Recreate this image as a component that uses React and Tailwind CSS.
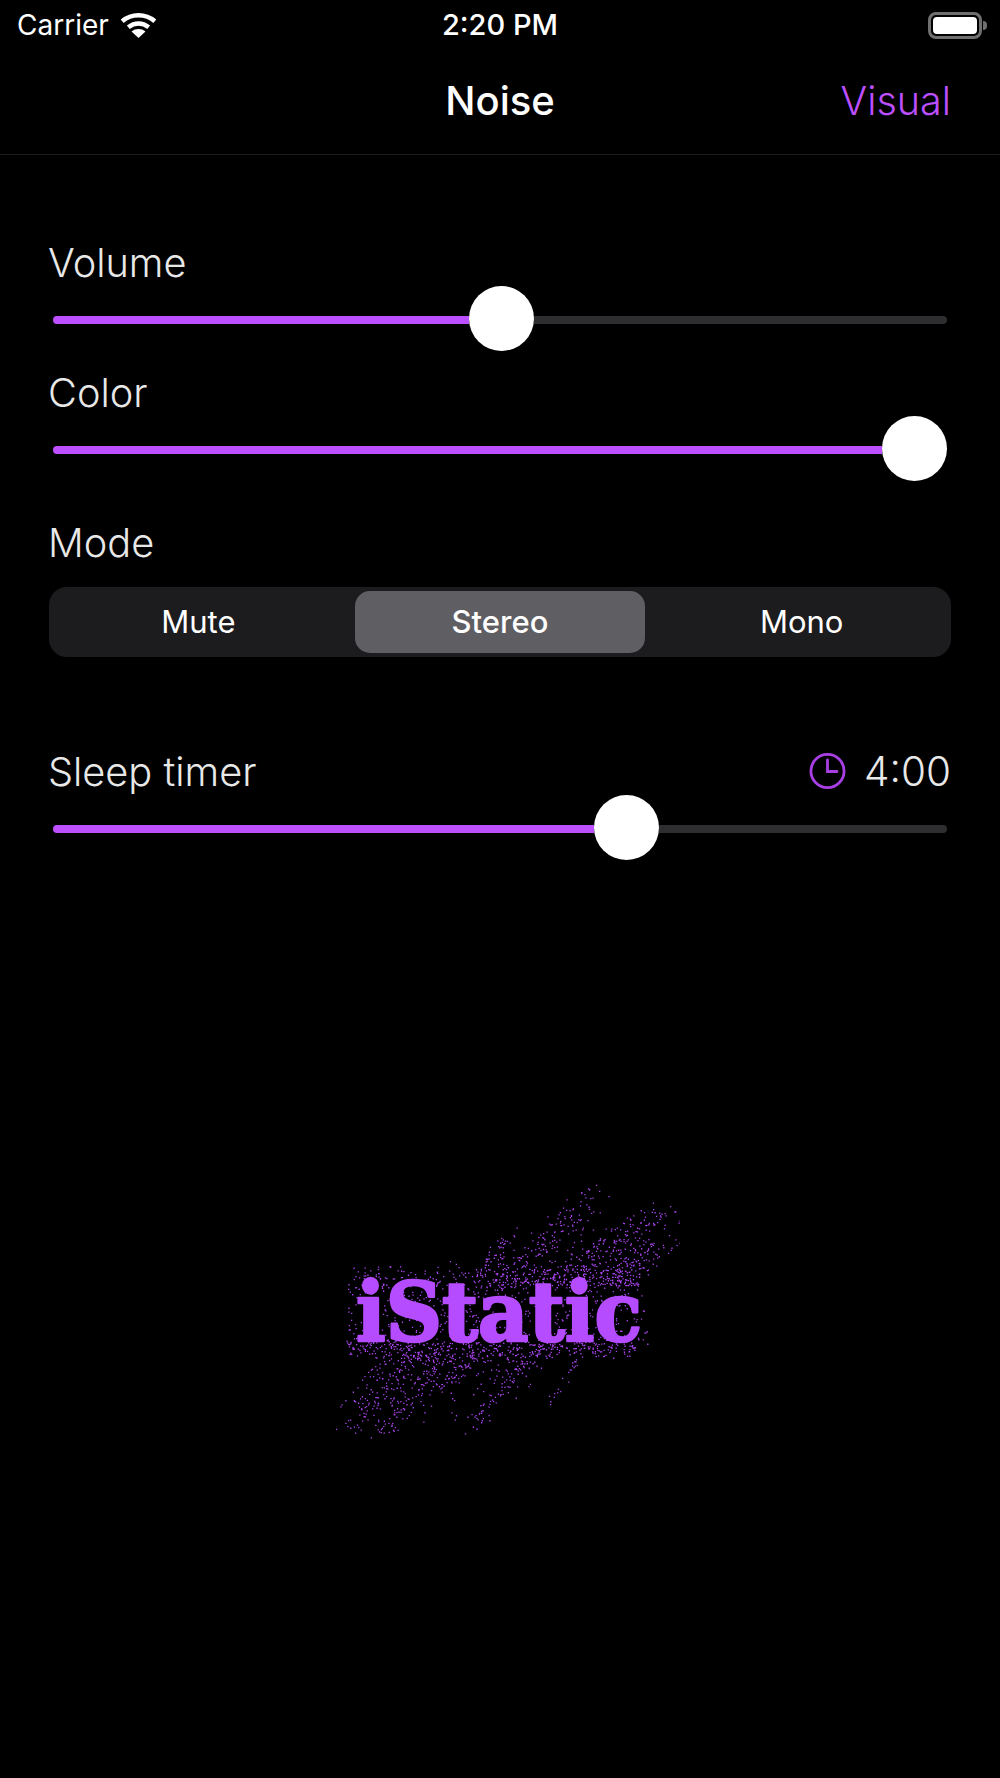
import React, { useMemo } from "react";

const sans = "font-['Inter','Liberation_Sans',sans-serif]";
const label = "text-[39.700px] font-light leading-[48px] text-[#e8e8e8] -ml-[1px]";

function Slider({ fill }) {
  return (
    <div className="flex items-center h-[65px] pl-[4px] pr-[4px]">
      <div className={`h-2 mt-[3px] bg-[#bc4fff] rounded-l-full ${fill}`} />
      <div className="w-[65px] h-[65px] rounded-full bg-white shrink-0" />
      <div className="flex-1 h-2 mt-[3px] bg-[#2e2e30] rounded-r-full" />
    </div>
  );
}

function rng(seed) {
  let s = seed;
  return () => {
    s = (s * 1664525 + 1013904223) >>> 0;
    return s / 4294967296;
  };
}

const STREAKS = [
  [560, 320, 815, 70, 30, 110],
  [700, 340, 1030, 130, 34, 150],
  [470, 310, 560, 200, 12, 35],
  [860, 340, 1000, 240, 20, 60],
  [480, 330, 620, 150, 12, 16],
  [300, 540, 80, 790, 20, 90],
  [370, 560, 170, 800, 22, 100],
  [620, 560, 430, 800, 14, 60],
  [470, 550, 360, 650, 14, 40],
  [770, 560, 690, 700, 8, 22],
  [200, 560, 100, 730, 10, 22],
];

function dots() {
  const r = rng(12345);
  let d = "";
  const add = (zx, zy) => {
    const x = zx / 3;
    const y = zy / 3;
    d += `M${x.toFixed(1)} ${y.toFixed(1)}h1.3v1.300h-1.300z`;
  };
  const gauss = () => r() + r() + r() - 1.5;
  for (const [x1, y1, x2, y2, w, n] of STREAKS) {
    for (let i = 0; i < n; i++) {
      const t = r();
      add(x1 + (x2 - x1) * t + gauss() * w * 2, y1 + (y2 - y1) * t + gauss() * w * 1.4);
    }
  }
  // wide diagonal wash above the word, thinning out toward the upper right
  for (let i = 0; i < 300; i++) {
    const t = r() * r() * 250;
    add(500 + r() * 460 + t * 0.95, 345 - t);
  }
  // wide diagonal wash below the word, thinning out toward the lower left
  for (let i = 0; i < 200; i++) {
    const t = r() * r() * 230;
    add(190 + r() * 520 - t * 0.85, 550 + t);
  }
  // halo hugging the word
  for (let i = 0; i < 220; i++) add(100 + r() * 870, 322 + gauss() * 36);
  for (let i = 0; i < 380; i++) add(85 + r() * 860, 533 + gauss() * 30);
  for (let i = 0; i < 520; i++) add(78 + r() * 905, 340 + r() * 185);
  return d;
}

function Logo() {
  const d = useMemo(dots, []);
  return (
    <svg viewBox="0 0 360 280" className="w-[360px] h-[280px]">
      <path d={d} fill="#a944ee" />
      <text
        x="36"
        y="171"
        fontFamily="'DejaVu Serif', serif"
        fontWeight="700"
        fontSize="82"
        textLength="286"
        lengthAdjust="spacingAndGlyphs"
        fill="#b54cff"
        stroke="#b54cff"
        strokeWidth="2.600"
        strokeLinejoin="round"
      >
        iStatic
      </text>
    </svg>
  );
}

function Wifi() {
  return (
    <svg viewBox="0 0 37 26" className="w-[37px] h-[26px] ml-[11px]" fill="none" stroke="#fff" strokeWidth="4.6">
      <path d="M2.2 9.2C11.5 1.2 25.500 1.200 34.800 9.200" />
      <path d="M8.300 15.200C14.500 10.200 22.500 10.200 28.700 15.200" />
      <path d="M18.500 26L11.500 19.500C15.500 16.200 21.500 16.200 25.500 19.500Z" fill="#fff" stroke="none" />
    </svg>
  );
}

function Battery() {
  return (
    <div className="flex items-center w-[59px]">
      <div className="w-[54px] h-[27px] rounded-[8px] border-[3px] border-[#6f6f6f] p-[2px]">
        <div className="w-full h-full rounded-[4px] bg-white" />
      </div>
      <div className="w-1 h-[9px] ml-[1px] rounded-r-full bg-[#6f6f6f]" />
    </div>
  );
}

function Clock() {
  return (
    <svg viewBox="0 0 37 36" className="w-[37px] h-[36px]" fill="none" stroke="#a83fe4" strokeWidth="2.8" strokeLinecap="round">
      <circle cx="18.500" cy="18" r="16.600" />
      <path d="M18.500 7V18.500H28" />
    </svg>
  );
}

export default function App() {
  return (
    <div className={`w-[1000px] h-[1778px] bg-black text-white overflow-hidden ${sans}`}>
      <div className="grid grid-cols-3 items-center h-[50px] px-[15px]">
        <div className="flex items-center pl-[2px]">
          <span className="text-[28px] leading-[50px]">Carrier</span>
          <Wifi />
        </div>
        <span className="text-center text-[29px] font-medium leading-[50px]">2:20 PM</span>
        <div className="flex justify-end -mr-[2px]">
          <Battery />
        </div>
      </div>
      <div className="relative flex items-center justify-center h-[105px] border-b border-[#1c1c1e]">
        <span className="text-[40px] font-medium leading-none -translate-y-[1px]">Noise</span>
        <span className="absolute right-[49px] top-[27px] text-[39.500px] font-light leading-[48px] text-[#bc4fff]">Visual</span>
      </div>

      <div className="px-[49px] pt-[84px]">
        <div className={`${label} h-[47px]`}>Volume</div>
        <Slider fill="w-[416px]" />
        <div className={`${label} h-[47px] mt-[18px]`}>Color</div>
        <Slider fill="w-[829px]" />

        <div className={`${label} mt-[38px] h-[68px]`}>Mode</div>
        <div className="grid grid-cols-3 items-center h-[70px] rounded-[18px] bg-[#1c1c1e] text-[31px] leading-none">
          <div className="text-center -translate-x-[1px] -translate-y-[1px]">Mute</div>
          <div className="flex justify-center">
            <div className="w-[290px] h-[62px] flex items-center justify-center rounded-[15px] bg-[#5f5e63] font-[550]">
              <span className="-translate-y-[1px]">Stereo</span>
            </div>
          </div>
          <div className="text-center translate-x-[1px] -translate-y-[1px]">Mono</div>
        </div>

        <div className="flex items-start justify-between mt-[91px] h-[47px]">
          <span className={label}>Sleep timer</span>
          <span className="flex items-start gap-[18px] pt-[5px]">
            <Clock />
            <span className="text-[40.500px] font-light leading-[38px] text-[#e8e8e8]">4:00</span>
          </span>
        </div>
        <Slider fill="w-[541px]" />
      </div>

      <div className="flex justify-center mt-[310px]">
        <Logo />
      </div>
    </div>
  );
}
